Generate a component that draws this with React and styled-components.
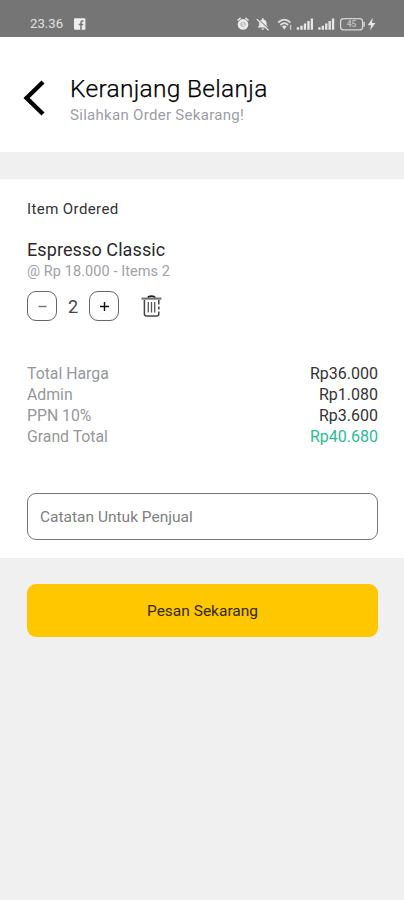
import { useState } from 'react';
import styled, { createGlobalStyle } from 'styled-components';

const summary = [
  { label: 'Total Harga', value: 'Rp36.000' },
  { label: 'Admin', value: 'Rp1.080' },
  { label: 'PPN 10%', value: 'Rp3.600' },
  { label: 'Grand Total', value: 'Rp40.680', total: true },
];

export default function App() {
  const [qty, setQty] = useState(2);
  const [note, setNote] = useState('');

  return (
    <Page>
      <GlobalStyle />
      <StatusBar>
        <Clock>23.36</Clock>
        <FacebookIcon />
        <StatusIcons />
      </StatusBar>

      <Header>
        <BackButton aria-label="Kembali">
          <svg width="22" height="36" viewBox="0 0 22 36" fill="none">
            <path d="M20 2 L3.6 18 L20 34" stroke="#000" strokeWidth="4.4" />
          </svg>
        </BackButton>
        <div>
          <Title>Keranjang Belanja</Title>
          <SubTitle>Silahkan Order Sekarang!</SubTitle>
        </div>
      </Header>

      <OrderCard>
        <SectionTitle>Item Ordered</SectionTitle>
        <ItemName>Espresso Classic</ItemName>
        <ItemPrice>@ Rp 18.000 - Items {qty}</ItemPrice>
        <QtyRow>
          <QtyButton onClick={() => setQty((prev) => Math.max(1, prev - 1))}>
            <svg width="9" height="9" viewBox="0 0 9 9">
              <path d="M0.5 4.5h8" stroke="#777" strokeWidth="1.5" />
            </svg>
          </QtyButton>
          <Qty>{qty}</Qty>
          <QtyButton onClick={() => setQty((prev) => prev + 1)}>
            <svg width="9" height="9" viewBox="0 0 9 9">
              <path d="M0 4.5h9M4.5 0v9" stroke="#111" strokeWidth="1.4" />
            </svg>
          </QtyButton>
          <TrashButton aria-label="Hapus">
            <TrashIcon />
          </TrashButton>
        </QtyRow>

        <Summary>
          {summary.map((row) => (
            <SummaryRow key={row.label}>
              <Label>{row.label}</Label>
              <Value $total={row.total}>{row.value}</Value>
            </SummaryRow>
          ))}
        </Summary>

        <NoteInput
          placeholder="Catatan Untuk Penjual"
          value={note}
          onChange={(e) => setNote(e.target.value)}
        />
      </OrderCard>

      <OrderButton>Pesan Sekarang</OrderButton>
    </Page>
  );
}

function FacebookIcon() {
  return (
    <svg width="12" height="12" viewBox="0 0 12 12">
      <rect x="0" y="0.3" width="11.4" height="11.4" rx="1" fill="#eee" />
      <path
        d="M9.5 2.9H8.3Q7 2.9 7 4.2V11.7M4.7 6.4h4.6"
        fill="none"
        stroke="#757575"
        strokeWidth="1.5"
      />
    </svg>
  );
}

function StatusIcons() {
  return (
    <IconStrip width="140" height="16" viewBox="0 0 140 16" fill="#e8e8e8">
      {/* alarm */}
      <circle cx="6" cy="8.4" r="4" fill="#bbb" stroke="#ececec" strokeWidth="2.6" />
      <path
        d="M.5 4.5l3.2-2.6M11.5 4.5L8.3 1.9M6 6.2v2.6l1.7 1"
        fill="none"
        stroke="#e8e8e8"
        strokeWidth="1.4"
      />
      {/* muted bell */}
      <path d="M20.5 11.5l1.7-2V6.3Q22.5 4 25 3.5V2.2h1.6v1.3Q29.4 4 29.6 6.8V9l1.4 2.5z" />
      <path d="M24.4 12.4h2.8a1.4 1.4 0 0 1-2.8 0z" />
      <path d="M20.8 3l10.8 10" stroke="#757575" strokeWidth="1.1" />
      <path d="M19.9 3.2l11.7 11" stroke="#e8e8e8" strokeWidth="1.2" />
      {/* wifi */}
      <path
        d="M41.2 6.5Q47.3.8 53.4 6.5M43.5 9Q47.3 5.3 51.1 9"
        fill="none"
        stroke="#dedede"
        strokeWidth="1.8"
      />
      <path d="M45.1 10.5q2.2-2 4.4 0L47.3 13.4z" />
      <path d="M53.6 9v4.8" stroke="#c5c5c5" strokeWidth="1.5" />
      {/* signal bars */}
      <path d="M59.8 11.2h2.3v2.6h-2.3zM63.3 9.7h2.3v4.1h-2.3zM66.8 7.4h2.3v6.4h-2.3zM70.3 5h2.3v8.8h-2.3zM73.7 2.5h2.3v11.3h-2.3z" />
      <path d="M81.3 11.2h2.3v2.6h-2.3zM84.7 9.7h2.3v4.1h-2.3zM88.1 7.4h2.3v6.4h-2.3zM91.5 5h2.3v8.8h-2.3zM94.9 2.5h2.3v11.3h-2.3z" />
      {/* battery */}
      <rect x="103.6" y="2.7" width="22" height="11.2" rx="3" fill="none" stroke="#d5d5d5" strokeWidth="1.3" />
      <path d="M127 6v4.8" stroke="#d5d5d5" strokeWidth="1.6" />
      <text x="114.6" y="11.3" fontSize="8.5" fontWeight="700" textAnchor="middle" fill="#bdbdbd">
        45
      </text>
      <path d="M135.8 1.8l-5 7.4h3.4l-1.2 5.4 5.4-7.6h-3.5z" />
    </IconStrip>
  );
}

function TrashIcon() {
  return (
    <svg width="21" height="23" viewBox="0 0 21 23" fill="none" stroke="#444">
      <path d="M7 2.8Q7.5 1.2 10.5 1.2T14 2.8" stroke="#222" strokeWidth="1.8" />
      <path d="M.5 3.6h20" stroke="#777" strokeWidth="2.2" />
      <path d="M3.4 5v14q0 2 2 2h10.4q2 0 2-2v-2.4M17.8 5v4.6M17.8 11.4v3" strokeWidth="1.5" />
      <path d="M7.3 7v10.5M10.5 7v10.5M13.7 7v10.5" stroke="#555" strokeWidth="1.3" />
    </svg>
  );
}

//-------------------Styled-components--------------------
const GlobalStyle = createGlobalStyle`
  * {
    box-sizing: border-box;
  }

  body {
    margin: 0;
    background: #f0f0f0;
    font-family: Roboto, 'Liberation Sans', sans-serif;
  }

  button, input {
    font-family: inherit;
  }
`;

const Page = styled.div`
  min-height: 100vh;
  background: #f0f0f0;
`;

const StatusBar = styled.div`
  display: flex;
  align-items: center;
  height: 37px;
  padding: 11px 27px 0 30px;
  background: #757575;
`;

const Clock = styled.span`
  width: 44px;
  color: #e0e0e0;
  font-size: 13.2px;
  line-height: 16px;
`;

const IconStrip = styled.svg`
  margin-left: auto;
`;

const Header = styled.header`
  display: flex;
  align-items: flex-start;
  height: 115px;
  padding: 37px 24px 0 23px;
  background: #fff;
`;

const BackButton = styled.button`
  display: flex;
  width: 47px;
  margin-top: 6px;
  padding: 0;
  border: 0;
  background: none;
`;

const Title = styled.h1`
  margin: 0;
  color: #000;
  font-size: 24.5px;
  font-weight: 300;
  letter-spacing: 0.3px;
  line-height: 30px;
  -webkit-text-stroke: 0.25px #000;
`;

const SubTitle = styled.p`
  margin: 0;
  color: #9b9ea5;
  font-size: 15px;
  font-weight: 400;
  letter-spacing: 0.3px;
  line-height: 23px;
`;

const OrderCard = styled.section`
  height: 379px;
  margin-top: 27px;
  padding: 20px 26px 0 27px;
  background: #fff;
`;

const SectionTitle = styled.h2`
  margin: 0;
  color: #333;
  font-size: 15px;
  font-weight: 400;
  letter-spacing: 0.4px;
  line-height: 20px;
`;

const ItemName = styled.h3`
  margin: 18px 0 0;
  color: #2a2a2a;
  font-size: 18px;
  font-weight: 400;
  letter-spacing: 0.1px;
  line-height: 25px;
`;

const ItemPrice = styled.p`
  margin: 0;
  color: #a0a2a6;
  font-size: 14.5px;
  font-weight: 400;
  letter-spacing: 0.08px;
  line-height: 19px;
`;

const QtyRow = styled.div`
  display: flex;
  align-items: center;
  height: 30px;
  margin-top: 10px;
`;

const QtyButton = styled.button`
  display: flex;
  align-items: center;
  justify-content: center;
  width: 30px;
  height: 30px;
  padding: 0;
  border: 1px solid #666;
  border-radius: 9px;
  background: #fff;
`;

const Qty = styled.span`
  width: 32px;
  padding-top: 1px;
  color: #444;
  font-size: 18px;
  text-align: center;
`;

const TrashButton = styled.button`
  display: flex;
  margin-left: 22px;
  padding: 0;
  border: 0;
  background: none;
`;

const Summary = styled.div`
  margin-top: 41.5px;
`;

const SummaryRow = styled.div`
  display: flex;
  justify-content: space-between;
  font-size: 16px;
  line-height: 21.33px;
`;

const Label = styled.span`
  color: #95979b;
  font-size: 15.8px;
`;

const Value = styled.span`
  color: ${({ $total }) => ($total ? '#2bbd93' : '#333')};
`;

const NoteInput = styled.input`
  display: block;
  width: 100%;
  height: 47px;
  margin-top: 45.5px;
  padding: 1px 12px 0;
  border: 1px solid #777;
  border-radius: 9px;
  outline: none;
  color: #222;
  font-size: 15.5px;

  &::placeholder {
    color: #808080;
    opacity: 1;
  }
`;

const OrderButton = styled.button`
  display: block;
  width: calc(100% - 53px);
  height: 53px;
  margin: 26px 26px 0 27px;
  padding: 1px 0 0;
  border: 0;
  border-radius: 9px;
  background: #ffc700;
  color: #33290a;
  font-size: 15.5px;
`;
